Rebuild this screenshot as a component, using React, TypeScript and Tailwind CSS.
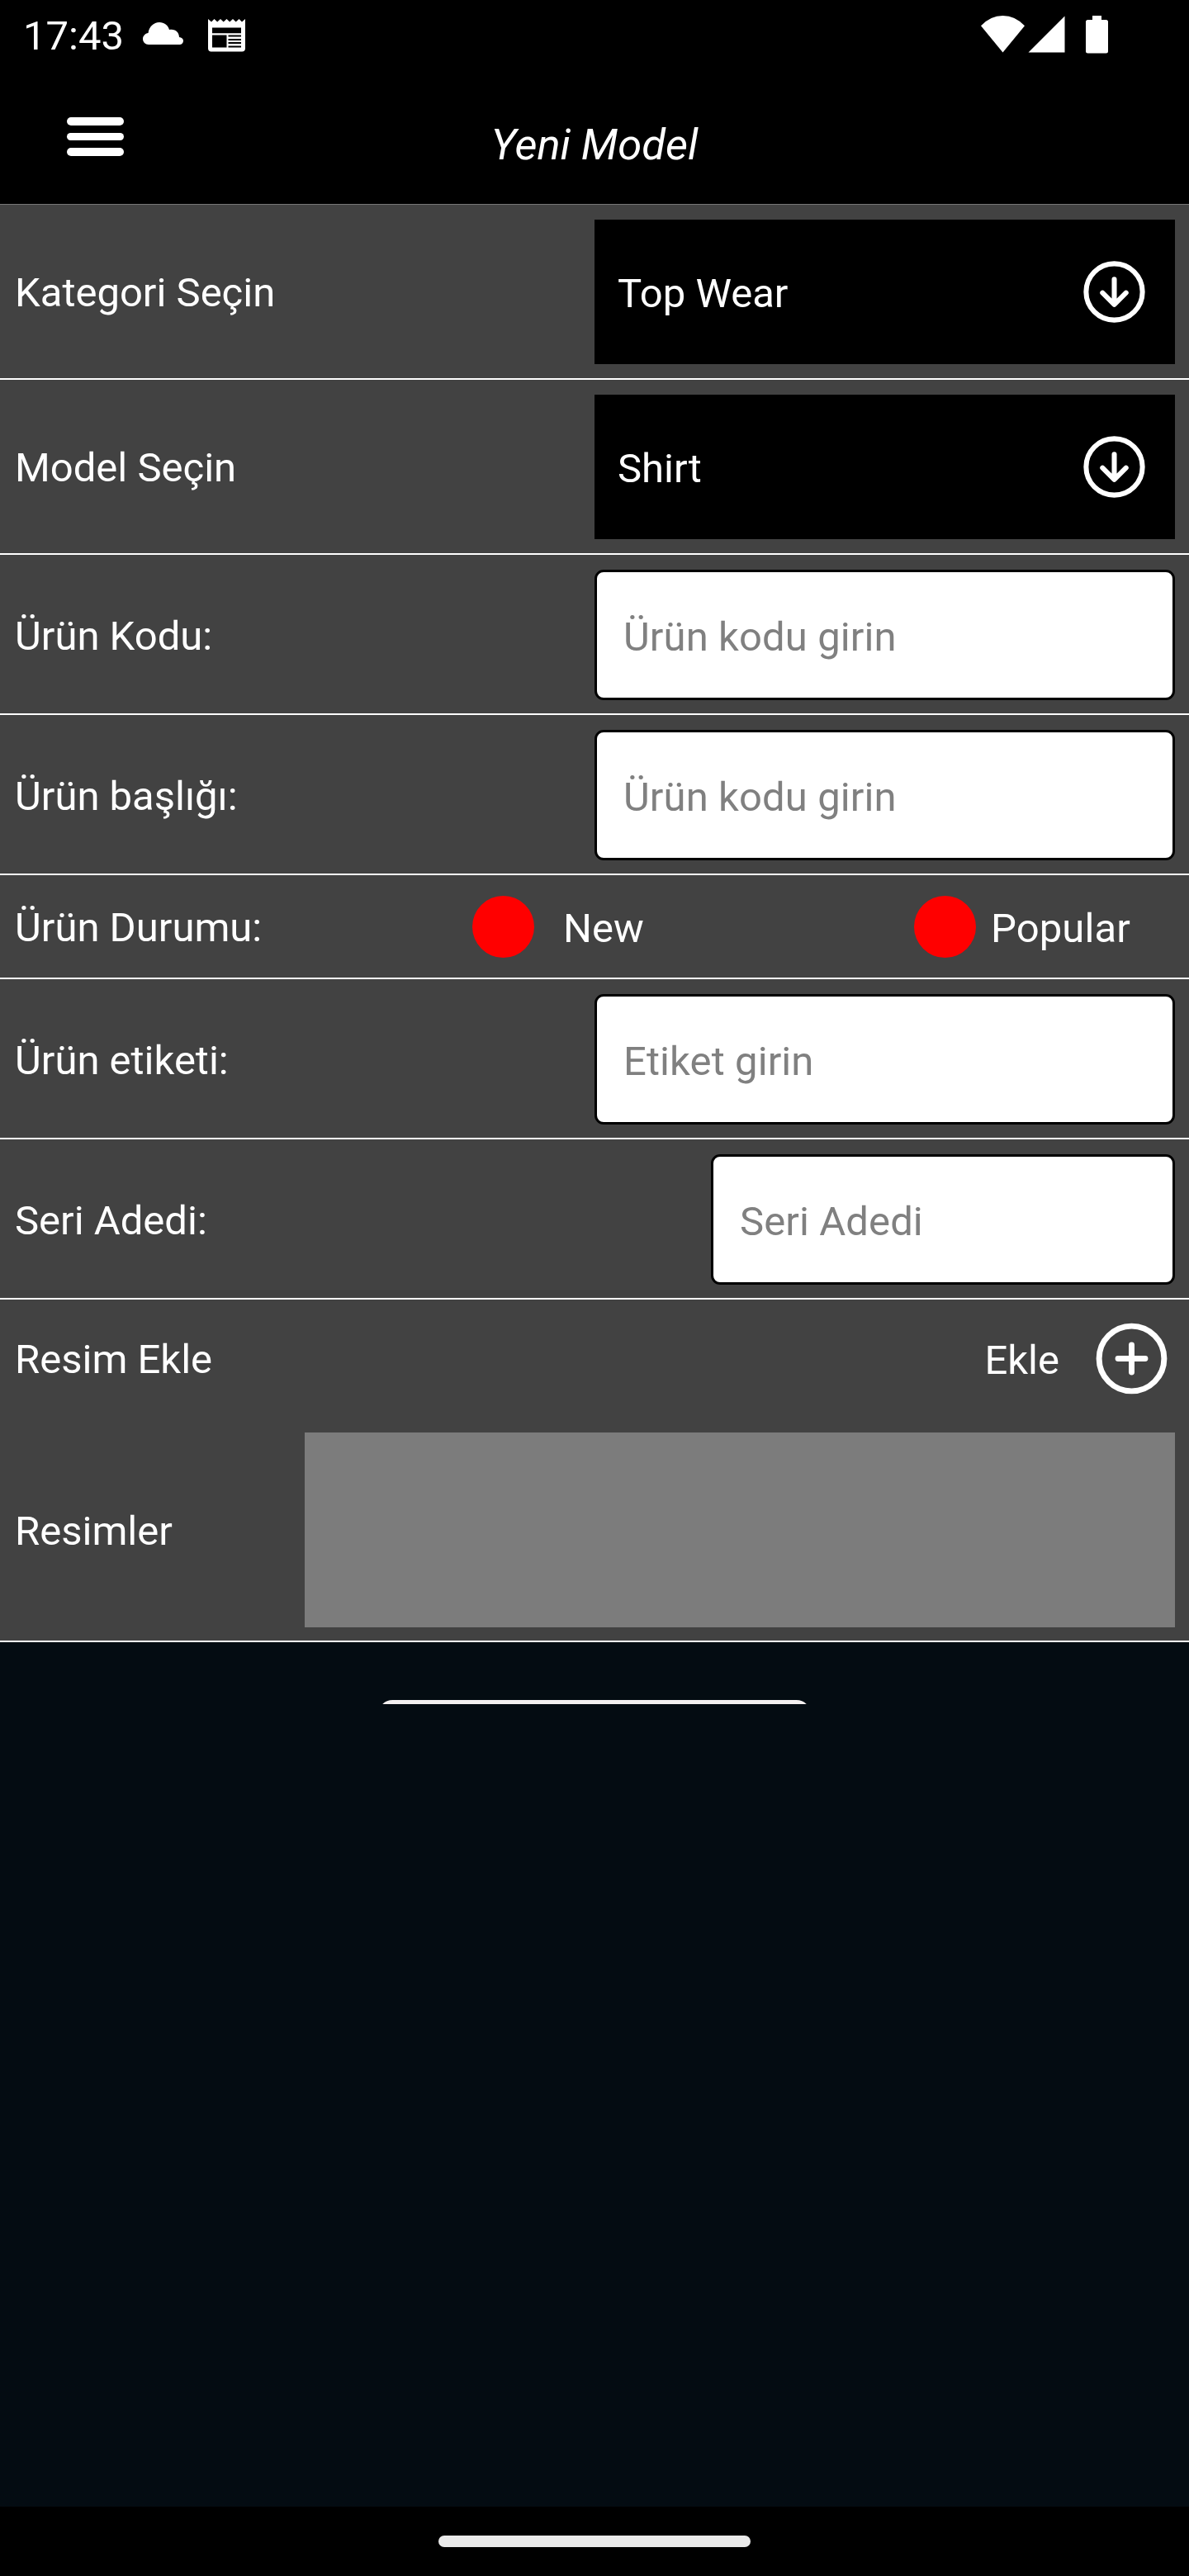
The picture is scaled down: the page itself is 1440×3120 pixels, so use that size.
import type { ReactNode } from 'react';

function Row({ label, className, children }: { label: string; className: string; children: ReactNode }) {
  return (
    <div className={`flex shrink-0 items-center justify-between border-white pr-[17px] pl-[18px] ${className}`}>
      <span className="pt-[3px]">{label}</span>
      {children}
    </div>
  );
}

function Select({ value }: { value: string }) {
  return (
    <button className="flex h-[175px] w-[703px] items-center justify-between bg-black pr-[28px] pl-[28px] text-left">
      <span className="pt-[5px]">{value}</span>
      <svg className="size-[91px]" viewBox="0 0 512 512" fill="none" stroke="currentColor" strokeWidth="34" strokeLinecap="round" strokeLinejoin="round">
        <circle cx="256" cy="256" r="192" />
        <path d="M176 262.6 256 342l80-79.4M256 331V170" />
      </svg>
    </button>
  );
}

function Field({ placeholder, className }: { placeholder: string; className: string }) {
  return (
    <input
      placeholder={placeholder}
      className={`h-[158px] rounded-[11px] border-[3.5px] border-black bg-white pt-[4px] pl-[32px] tracking-[0.1px] text-black placeholder:text-[#808080] placeholder:opacity-100 ${className}`}
    />
  );
}

function StatusBar() {
  return (
    <div className="flex h-[88px] shrink-0 items-start pl-[28px]">
      <span className="mt-[15px] w-[145px] leading-[58px]">17:43</span>
      <svg className="mt-[27px] h-[27px] w-[49px]" viewBox="0 0 49 27" fill="currentColor">
        <path d="M7 27C3 27 0 23.800 0 20C0 16.500 2.800 13.500 6.500 13C7.500 5.500 13 0 20 0C26 0 30.500 3.500 32 9C39 7.500 44 12 44 18C47 18.500 49 20 49 22.500C49 25 47 27 44.500 27Z" />
      </svg>
      <svg className="mt-[23px] ml-[30px] h-[40px] w-[45px]" viewBox="0 0 45 40" fill="currentColor">
        <path
          fillRule="evenodd"
          d="M0 0 4 3.500 7.500 0 11.200 3.500 15 0 18.700 3.500 22.500 0 26.200 3.500 30 0 33.700 3.500 37.500 0 41 3.500 45 0V35.500Q45 39.500 41 39.500H4Q0 39.500 0 35.500ZM5 10.500V17.200H40V10.500ZM5 19.500V34.500H22.500V19.500ZM24.500 19.500V21.500H40V19.500ZM24.500 24V26H40V24ZM24.500 28V30H40V28ZM24.500 32.500V34.500H40V32.500Z"
        />
      </svg>
      <svg className="mt-[19px] ml-[891px] h-[45px] w-[53px]" viewBox="0 0 53 45" fill="currentColor">
        <path d="M0 12.300Q11.500 0 26.500 0T53 12.300L26.500 44.500Z" />
      </svg>
      <svg className="mt-[19px] ml-[4px] h-[45px] w-[45px]" viewBox="0 0 45 45" fill="currentColor">
        <path d="M0.500 44.500 44.500 0.500V44.500Z" />
      </svg>
      <svg className="mt-[19px] ml-[25px] h-[46px] w-[27px]" viewBox="0 0 27 46" fill="currentColor">
        <path d="M8 0H19V5H24.500Q27 5 27 7.500V43Q27 45.500 24.500 45.500H2.500Q0 45.500 0 43V7.500Q0 5 2.500 5H8Z" />
      </svg>
    </div>
  );
}

function Header() {
  return (
    <div className="relative flex h-[159px] shrink-0 justify-center">
      <button aria-label="Menü" className="absolute top-[54px] left-[81px] flex flex-col gap-[9px]">
        <span className="h-[9.5px] w-[69px] rounded-full bg-white" />
        <span className="h-[9.5px] w-[69px] rounded-full bg-white" />
        <span className="h-[9.5px] w-[69px] rounded-full bg-white" />
      </button>
      <h1 className="mt-[56px] text-[52.5px] leading-[62px] italic">Yeni Model</h1>
    </div>
  );
}

export default function App() {
  return (
    <div className="flex h-[3120px] w-[1440px] flex-col overflow-hidden bg-black font-['Roboto',sans-serif] text-[49px] leading-[58px] text-white">
      <StatusBar />
      <Header />
      <main className="flex h-[1742px] shrink-0 flex-col border-t border-[#777777] bg-[#424242]">
        <Row label="Kategori Seçin" className="h-[212px] border-b-2 pt-px">
          <Select value="Top Wear" />
        </Row>
        <Row label="Model Seçin" className="h-[212px] border-b-2 pt-px">
          <Select value="Shirt" />
        </Row>
        <Row label="Ürün Kodu:" className="h-[194px] border-b-2 pt-[2px]">
          <Field placeholder="Ürün kodu girin" className="w-[703px]" />
        </Row>
        <Row label="Ürün başlığı:" className="h-[194px] border-b-2 pt-[2px]">
          <Field placeholder="Ürün kodu girin" className="w-[703px]" />
        </Row>
        <Row label="Ürün Durumu:" className="h-[126px] border-b-2 pt-px">
          <div className="flex w-[851px] items-center">
            <span className="size-[75px] rounded-full bg-[#ff0000]" />
            <span className="w-[425px] pt-[5px] pl-[35px]">New</span>
            <span className="ml-[35px] size-[75px] rounded-full bg-[#ff0000]" />
            <span className="pt-[5px] pl-[18px] tracking-[0.1px]">Popular</span>
          </div>
        </Row>
        <Row label="Ürün etiketi:" className="h-[194px] border-b-2 pt-[2px]">
          <Field placeholder="Etiket girin" className="w-[703px]" />
        </Row>
        <Row label="Seri Adedi:" className="h-[194px] border-b-2 pt-[2px]">
          <Field placeholder="Seri Adedi" className="w-[562px]" />
        </Row>
        <Row label="Resim Ekle" className="h-[143px]">
          <div className="flex items-center">
            <span className="pt-[5px] pr-[35px]">Ekle</span>
            <svg className="size-[105px]" viewBox="0 0 512 512" fill="none" stroke="currentColor" strokeWidth="34" strokeLinecap="round" strokeLinejoin="round">
              <circle cx="256" cy="256" r="192" />
              <path d="M256 176v160M336 256H176" />
            </svg>
          </div>
        </Row>
        <Row label="Resimler" className="h-[272px] border-b-2 pt-[2px]">
          <div className="h-[236px] w-[1054px] bg-[#7c7c7c]" />
        </Row>
      </main>
      <div className="flex h-[1047px] shrink-0 flex-col items-center bg-[#040c12] pt-[70px]">
        <div className="h-[5px] w-[524px] overflow-hidden">
          <div className="h-[140px] rounded-[17.5px] bg-[#f4f0f0]" />
        </div>
      </div>
      <div className="flex h-[84px] shrink-0 justify-center pt-[35px]">
        <div className="h-[14px] w-[378px] rounded-full bg-[#eaeaea]" />
      </div>
    </div>
  );
}
